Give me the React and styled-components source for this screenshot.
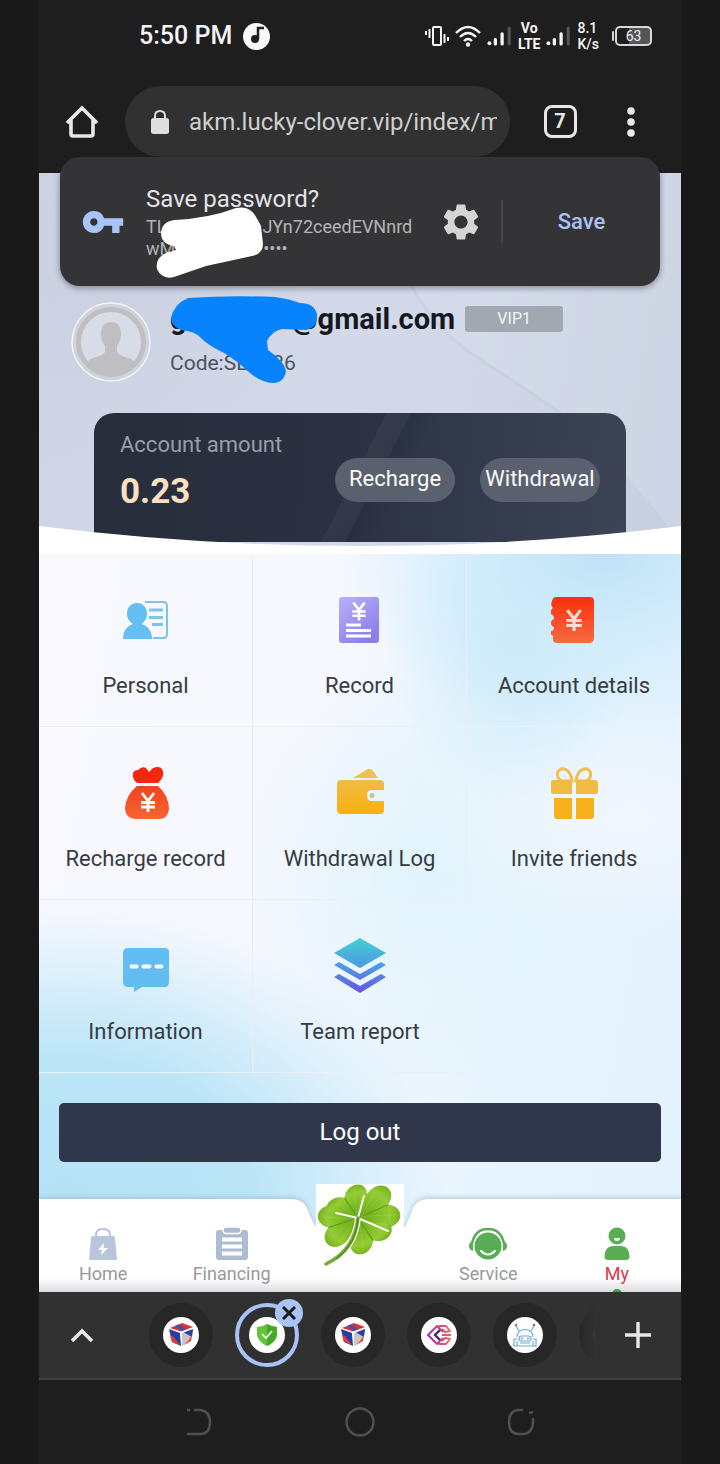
import { useState } from "react";
import styled, { createGlobalStyle, css } from "styled-components";
import { MdSettings, MdVpnKey } from "react-icons/md";

const GlobalStyle = createGlobalStyle`
    * {
        box-sizing: border-box;
    }
    body {
        margin: 0;
        background: #191919;
        font-family: Roboto, "Noto Sans", sans-serif;
    }
    button {
        border: none;
        padding: 0;
        background: none;
        font-family: inherit;
        cursor: pointer;
    }
    a {
        text-decoration: none;
        color: inherit;
    }
    svg {
        display: block;
        flex-shrink: 0;
    }
`

const Container = styled.div`
    position: relative;
    margin: 0 39px;
    background: #1e1e1e;
    overflow: hidden;
`

// ===== STATUS BAR =====
const StatusBar = styled.header`
    height: 72px;
    padding: 0 29px 0 100px;
    display: flex;
    align-items: center;
    justify-content: space-between;
    color: #f4f4f4;
`

const StatusGroup = styled.div`
    display: flex;
    align-items: center;
    gap: ${props => props.$gap};
`

const Clock = styled.span`
    font-size: 25px;
    font-weight: 500;
    line-height: 30px;
`

const Stacked = styled.span`
    font-size: 14px;
    line-height: 16px;
    font-weight: ${props => props.$bold ? 700 : 500};
    text-align: ${props => props.$bold ? "center" : "left"};
    display: flex;
    flex-direction: column;
`

const Battery = styled.span`
    position: relative;
    width: 37px;
    height: 20px;
    margin-left: 10px;
    border: 2px solid #d8d8d8;
    border-radius: 5px;
    background: linear-gradient(90deg, #1e1e1e 35%, #555 35%);
    font-size: 14px;
    line-height: 16px;
    text-align: center;
    &::before {
        content: "";
        position: absolute;
        left: -5px;
        top: 3px;
        width: 2px;
        height: 10px;
        border-radius: 2px;
        background: #d8d8d8;
    }
`

// ===== BROWSER BAR =====
const BrowserBar = styled.nav`
    display: flex;
    align-items: center;
    padding: 14px 29px 16px 0;
    height: 101px;
`

const BarButton = styled.button`
    width: ${props => props.$width};
    flex-shrink: 0;
    display: flex;
    align-items: center;
    justify-content: center;
    color: #e8e8e8;
`

const Address = styled.label`
    flex: 1;
    min-width: 0;
    height: 71px;
    border-radius: 36px;
    background: #313131;
    display: flex;
    align-items: center;
    gap: 16px;
    padding: 0 13px 0 22px;
    color: #dedede;
`

const AddressInput = styled.input`
    flex: 1;
    min-width: 0;
    height: 36px;
    border: none;
    outline: none;
    padding: 0;
    background: none;
    color: #cfcfcf;
    font-family: inherit;
    font-size: 24px;
`

const TabCount = styled.span`
    width: 33px;
    height: 33px;
    border: 3px solid #e8e8e8;
    border-radius: 8px;
    font-size: 20px;
    font-weight: 700;
    line-height: 27px;
`

// ===== SAVE PASSWORD =====
const Prompt = styled.section`
    position: absolute;
    z-index: 2;
    top: 157px;
    left: 21px;
    right: 21px;
    height: 129px;
    padding-left: 21px;
    border-radius: 20px;
    background: #343437;
    box-shadow: 0 2px 6px rgba(30, 35, 50, 0.45);
    display: flex;
    align-items: center;
    color: #a9c5f8;
`

const PromptText = styled.div`
    flex: 1;
    min-width: 0;
    margin-left: 21px;
`

const PromptTitle = styled.h2`
    margin: 0 0 2px;
    font-size: 24px;
    font-weight: 400;
    line-height: 30px;
    color: #e3e3e5;
`

const PromptLine = styled.p`
    margin: 0;
    display: flex;
    gap: ${props => props.$gap};
    font-size: 18px;
    line-height: 22px;
    color: #b4b4b7;
`

const SettingsButton = styled.button`
    color: #d5d5d6;
    margin-right: 18px;
`

const SaveButton = styled.button`
    width: 159px;
    height: 43px;
    border-left: 2px solid #454548;
    color: #a9c1f6;
    font-size: 22px;
    font-weight: 500;
`

const Scribble = styled.svg`
    position: absolute;
    left: ${props => props.$left};
    top: ${props => props.$top};
`

// ===== HERO =====
const Hero = styled.section`
    position: relative;
    padding: 129px 55px 12px;
    background:
        radial-gradient(circle at 8% 20%, rgba(196, 203, 220, 0.5), transparent 34%),
        linear-gradient(100deg, #cfd5e4 0%, #d3d9e9 45%, #d2d8e8 65%, #c6cddd 100%);
`

const Swirl = styled.svg`
    position: absolute;
    right: 0;
    top: 0;
`

const Profile = styled.div`
    position: relative;
    display: flex;
    gap: 19px;
    margin: 0 -20px 31px -23px;
    height: 80px;
`

const Email = styled.h1`
    margin: 0 0 14px;
    display: flex;
    align-items: center;
    font-size: 29px;
    font-weight: 700;
    line-height: 34px;
    color: #16181f;
`

const Hidden = styled.span`
    width: ${props => props.$width};
`

const Code = styled.p`
    margin: 0;
    display: flex;
    font-size: 21px;
    line-height: 26px;
    color: #4d525e;
`

const Vip = styled.span`
    width: 98px;
    height: 26px;
    margin-left: 10px;
    border-radius: 3px;
    background: #a1a8b2;
    color: #f5f6f8;
    font-size: 16px;
    font-weight: 400;
    line-height: 26px;
    text-align: center;
`

const Card = styled.div`
    position: relative;
    height: 129px;
    padding: 17px 26px;
    border-radius: 20px 20px 0 0;
    background:
        linear-gradient(117deg, transparent 49%, rgba(255, 255, 255, 0.04) 49%, rgba(255, 255, 255, 0.02) 53%, rgba(10, 20, 40, 0.1) 53%, transparent 58%),
        linear-gradient(95deg, #282d3a 0%, #2b3142 45%, #3c4455 100%);
    display: flex;
    justify-content: space-between;
`

const CardLabel = styled.p`
    margin: 0 0 12px;
    font-size: 22px;
    line-height: 30px;
    color: #9a9ea8;
`

const Amount = styled.strong`
    display: block;
    font-size: 35px;
    line-height: 40px;
    color: #fbdfc3;
`

const CardActions = styled.div`
    display: flex;
    gap: 25px;
    margin-top: 28px;
`

const PillButton = styled.button`
    width: 120px;
    height: 44px;
    border-radius: 22px;
    background: #5a606e;
    color: #fafafa;
    font-size: 22px;
    line-height: 40px;
    padding-bottom: 2px;
    white-space: nowrap;
`

const Curve = styled.svg`
    position: absolute;
    left: 0;
    bottom: 0;
    width: 100%;
    height: 28px;
`

// ===== MENU =====
const Main = styled.main`
    background:
        radial-gradient(ellipse 42% 24% at 88% 0%, #bfe2f6 0%, rgba(207, 235, 251, 0.8) 45%, transparent 100%),
        radial-gradient(ellipse 20% 22% at 74% 12%, rgba(196, 232, 248, 0.8), transparent 100%),
        radial-gradient(ellipse 30% 16% at 92% 36%, rgba(244, 247, 255, 0.9), transparent 100%),
        radial-gradient(ellipse 60% 40% at 4% 88%, #b6e2f6 0%, #bbe5f7 50%, transparent 100%),
        radial-gradient(ellipse 30% 30% at 60% 44%, rgba(224, 243, 251, 0.9), transparent 100%),
        radial-gradient(ellipse 24% 10% at 50% 80%, rgba(240, 246, 255, 0.7), transparent 100%),
        linear-gradient(100deg, #f8f8fe 0%, #f6f8fe 42%, #e6f4fd 72%, #e2f1fd 100%);
`

const MenuGrid = styled.div`
    display: grid;
    grid-template-columns: repeat(3, 1fr);
`

const MenuItem = styled.a`
    height: 173px;
    padding-top: 38px;
    display: flex;
    flex-direction: column;
    align-items: center;
    gap: 23px;
    border-bottom: 1px solid #ebeff6;
    border-right: 1px solid #e9eef6;
    font-size: 22px;
    line-height: 30px;
    color: #363b43;
    &:nth-child(3n), &:last-child {
        border-right: none;
    }
`

const MenuIcon = styled.svg`
    width: 56px;
    height: 56px;
`

const LogOut = styled.button`
    display: block;
    width: calc(100% - 40px);
    height: 59px;
    margin: 30px 20px 37px;
    padding-bottom: 2px;
    border-radius: 5px;
    background: #31374a;
    color: #fcfcfc;
    font-size: 24px;
`

// ===== APP TABS =====
const AppTabs = styled.nav`
    position: relative;
    height: 93px;
    display: grid;
    grid-template-columns: repeat(5, 1fr);
    overflow: visible;
`

const AppTabsShape = styled.svg`
    position: absolute;
    inset: 0;
    width: 100%;
    height: 100%;
    overflow: visible;
    filter: drop-shadow(0 -2px 2px rgba(120, 150, 180, 0.35));
`

const AppTabsShade = styled.div`
    position: absolute;
    left: 0;
    right: 0;
    bottom: 0;
    height: 14px;
    background: linear-gradient(180deg, transparent, #dcdcdf);
`

const AppTab = styled.a`
    position: relative;
    padding-top: 28px;
    display: flex;
    flex-direction: column;
    align-items: center;
    gap: 2px;
    font-size: 18px;
    line-height: 22px;
    color: ${props => props.$active ? "#dc3848" : "#96989c"};
    ${props => props.$active && css`
        &::after {
            content: "";
            position: absolute;
            bottom: -7px;
            width: 10px;
            height: 10px;
            border-radius: 50%;
            background: #449b45;
        }
    `}
`

const CloverTab = styled.a`
    position: relative;
    justify-self: center;
    margin-top: -15px;
    width: 88px;
    height: 86px;
    background: #fdfefd;
`

// ===== BROWSER TAB STRIP =====
const TabStrip = styled.nav`
    position: relative;
    height: 88px;
    display: flex;
    background: #313132;
    border-bottom: 2px solid #404041;
`

const StripList = styled.div`
    flex: 1;
    min-width: 0;
    margin-left: 13px;
    display: flex;
    overflow: hidden;
    mask-image: linear-gradient(90deg, #000 96%, transparent 100%);
`

const StripTab = styled.button`
    position: relative;
    width: 86px;
    flex-shrink: 0;
    display: flex;
    align-items: center;
    justify-content: center;
`

const StripCircle = styled.span`
    width: 64px;
    height: 64px;
    border-radius: 50%;
    display: flex;
    align-items: center;
    justify-content: center;
    background: ${props => props.$active ? "#303031" : "#272728"};
    border: ${props => props.$active ? "4px solid #a9c3f5" : "none"};
`

const CloseBadge = styled.span`
    position: absolute;
    top: 7px;
    right: 7px;
    width: 28px;
    height: 28px;
    border-radius: 50%;
    background: #a9c3f5;
    display: flex;
    align-items: center;
    justify-content: center;
`

// ===== SYSTEM KEYS =====
const SystemKeys = styled.footer`
    height: 84px;
    padding: 0 80px;
    display: grid;
    grid-template-columns: repeat(3, 1fr);
`

const SystemKey = styled.button`
    display: flex;
    align-items: center;
    justify-content: center;
`

const Signal = () => (
  <svg width="25" height="20" viewBox="0 0 26 20">
    <circle cx="2.5" cy="17.5" r="2" fill="#f4f4f4" />
    <rect x="7" y="12" width="3.4" height="8" rx="1.6" fill="#f4f4f4" />
    <rect x="14" y="6" width="3.4" height="14" rx="1.6" fill="#f4f4f4" />
    <rect x="21.5" y="0" width="3.2" height="20" rx="1.6" fill="#555" />
  </svg>
)

const Yen = ({ x, y, size = 1, color = "#fff" }) => (
  <g transform={`translate(${x} ${y}) scale(${size})`} fill="none" stroke={color} strokeWidth="2.8">
    <path d="M-6 -9 L0 -1 L6 -9 M0 -2 V10 M-7 0.5 H7 M-7 5 H7" />
  </g>
)

const PersonalIcon = () => (
  <MenuIcon viewBox="0 0 56 56">
    <path d="M27 10 H45 Q49 10 49 14 V42 Q49 46 45 46 H35" fill="none" stroke="#7cc4ea" strokeWidth="2" />
    <path d="M31 18 H45 M31 25.5 H45 M34 32.5 H45" stroke="#7cc4ea" strokeWidth="3" />
    <path d="M19 11 C25 11 29 15.500 29 21.500 C29 26.500 26.500 30 23.500 32 C30 34 34 39 34 47 H5 C5 39 9 34 15 32 C11.500 30 9 26.500 9 21.500 C9 15.500 13 11 19 11Z" fill="#66bff2" />
  </MenuIcon>
)

const RecordIcon = () => (
  <MenuIcon viewBox="0 0 56 56">
    <defs>
      <linearGradient id="rec" x1="0" y1="0" x2="0.6" y2="1">
        <stop offset="0" stopColor="#b9b0fa" />
        <stop offset="1" stopColor="#8a7fe9" />
      </linearGradient>
    </defs>
    <rect x="7" y="5" width="40" height="46" rx="3" fill="url(#rec)" />
    <Yen x={27} y={19} size={0.95} />
    <path d="M14 33 H29 M14 38.500 H39 M14 44 H39" stroke="#fff" strokeWidth="3" />
  </MenuIcon>
)

const DetailsIcon = () => (
  <MenuIcon viewBox="0 0 56 56">
    <defs>
      <linearGradient id="det" x1="0" y1="0" x2="0" y2="1">
        <stop offset="0" stopColor="#fb2f0c" />
        <stop offset="1" stopColor="#f56c42" />
      </linearGradient>
    </defs>
    <path d="M10 5 H44 Q48 5 48 9 V46 Q48 51 43 51 H11 Q7 51 7 47 V44 Q4 43 5 39 Q8 39 8 35 Q5 34 5 31 Q5 28 8 27 Q8 23 5 22 Q4 18 7 16 Q4 13 6 9 Q7 5 10 5Z" fill="url(#det)" />
    <Yen x={28} y={28} size={1.1} color="#fbe1d5" />
  </MenuIcon>
)

const MoneyBagIcon = () => (
  <MenuIcon viewBox="0 0 56 56">
    <defs>
      <linearGradient id="bag" x1="0" y1="0" x2="0" y2="1">
        <stop offset="0" stopColor="#f0431c" />
        <stop offset="1" stopColor="#f76533" />
      </linearGradient>
    </defs>
    <path d="M19 18 Q14 14 15 8 Q16 5 20 5 Q24 1 28 3 L31 7 L35 3 Q40 1 43 3 Q46 6 45 11 Q43 16 40 18Z" fill="#f3260e" />
    <path d="M19 21 H40 Q51 31 51 44 Q50 54 41 54 H17 Q7 53 7 43 Q8 30 19 21Z" fill="url(#bag)" />
    <Yen x={30} y={37} />
  </MenuIcon>
)

const WalletIcon = () => (
  <MenuIcon viewBox="0 0 56 56">
    <defs>
      <linearGradient id="wal" x1="0" y1="0" x2="0" y2="1">
        <stop offset="0" stopColor="#f0bd45" />
        <stop offset="1" stopColor="#f8b00f" />
      </linearGradient>
    </defs>
    <path d="M21 13 L34 5 Q38 2 41 6 L46 13Z" fill="#f1bf4c" />
    <path d="M9 15 H48 Q52 15 52 19 V25 H40 Q35 25 35 30 Q35 36 40 36 H52 V45 Q52 49 48 49 H9 Q5 49 5 45 V19 Q5 15 9 15Z" fill="url(#wal)" />
    <circle cx="40" cy="30.500" r="2.500" fill="#b9c98a" />
  </MenuIcon>
)

const GiftIcon = () => (
  <MenuIcon viewBox="0 0 56 56">
    <g fill="none" stroke="#f0be4d" strokeWidth="3">
      <path d="M26 16 C25 7 20 3 15 4 C9 7 11 15 17 16 Z" />
      <path d="M30 16 C31 7 36 3 41 4 C47 7 45 15 39 16 Z" />
    </g>
    <path d="M7 15 H26 V29 H7 Q5 29 5 27 V17 Q5 15 7 15Z M30 15 H49 Q52 15 52 18 V27 Q52 29 49 29 H30Z" fill="#f1bb42" />
    <path d="M8 33 H26 V54 H11 Q8 54 8 51Z M30 33 H48 V51 Q48 54 45 54 H30Z" fill="#f8b11c" />
  </MenuIcon>
)

const MessageIcon = () => (
  <MenuIcon viewBox="0 0 56 56">
    <path d="M10 10 H47 Q51 10 51 14 V44 Q51 49 47 49 H24 L16 54 L16 49 H10 Q5 49 5 44 V15 Q5 10 10 10Z" fill="#62bdf1" />
    <path d="M13.500 28.500 H18.500 M25.500 28.500 H31.500 M38.500 28.500 H43.500" stroke="#fff" strokeWidth="4" strokeLinecap="round" />
  </MenuIcon>
)

const TeamIcon = () => (
  <MenuIcon viewBox="0 0 56 56">
    <defs>
      <linearGradient id="team" gradientUnits="userSpaceOnUse" x1="0" y1="0" x2="0" y2="56">
        <stop offset="0" stopColor="#46cfd2" />
        <stop offset="0.5" stopColor="#4b9ce3" />
        <stop offset="1" stopColor="#6d51e2" />
      </linearGradient>
    </defs>
    <path d="M28 0 L54 15 L28 30 L2 15Z M2 27 L7 24 L28 36 L49 24 L54 27 L28 42Z M2 39 L7 36 L28 48 L49 36 L54 39 L28 55Z" fill="url(#team)" />
  </MenuIcon>
)

const HomeIcon = () => (
  <svg width="34" height="34" viewBox="0 0 34 34">
    <path d="M10 10 V8 Q10 2 17 2 Q24 2 24 8 V10" fill="none" stroke="#b6c3da" strokeWidth="2" />
    <path d="M7 9 H27 Q29 9 29 11 L31 33 H3 L5 11 Q5 9 7 9Z" fill="#b9c5da" />
    <path d="M18 16 L12 23 H16 L15 28 L22 21 H17.500Z" fill="#fff" />
  </svg>
)

const FinancingIcon = () => (
  <svg width="34" height="34" viewBox="0 0 34 34">
    <rect x="1" y="3" width="32" height="30" rx="3" fill="#aebcd3" />
    <rect x="8" y="0" width="18" height="6.500" rx="3" fill="#aebcd3" stroke="#fff" strokeWidth="1.500" />
    <path d="M7 12.500 H27 M7 19.500 H27 M7 26.500 H27" stroke="#fff" strokeWidth="4" />
  </svg>
)

const ServiceIcon = () => (
  <svg width="40" height="34" viewBox="0 0 40 34">
    <circle cx="20" cy="19" r="13.500" fill="#58ad55" />
    <path d="M4 17 C6 6 12 2 20 2 C28 2 34 6 36 17" fill="none" stroke="#58ad55" strokeWidth="2.500" />
    <path d="M5 14 V24 Q1 23 1 19 Q1 15 5 14Z M35 14 V24 Q39 23 39 19 Q39 15 35 14Z" fill="#58ad55" />
    <path d="M13 24 Q20 31 27 24" fill="none" stroke="#fff" strokeWidth="2" strokeLinecap="round" />
  </svg>
)

const MyIcon = () => (
  <svg width="26" height="34" viewBox="0 0 26 34">
    <circle cx="13" cy="9" r="8.500" fill="#58ad55" />
    <path d="M10 11 H16 Q16 14 13 14 Q10 14 10 11Z" fill="#fff" />
    <path d="M8 19 H18 Q25 20 25.500 29 Q25.500 33 22 33 H4 Q0.500 33 0.500 29 Q1 20 8 19Z" fill="#58ad55" />
  </svg>
)

const leaf = "M0 0 C-7 -5 -20 -12 -21 -22 C-22 -33 -8 -38 0 -27 C8 -38 22 -33 21 -22 C20 -12 7 -5 0 0Z"

const leaves = [
  { angle: -34, scale: "1.08 0.9" },
  { angle: 66, scale: "1.02 1.22" },
  { angle: -108, scale: "1 1.15" },
  { angle: 146, scale: "1.1 1" },
]

const Clover = () => (
  <svg width="88" height="86" viewBox="0 0 88 86">
    <defs>
      <radialGradient id="leaf" gradientUnits="userSpaceOnUse" cx="0" cy="0" r="36">
        <stop offset="0" stopColor="#5c9f18" />
        <stop offset="0.4" stopColor="#7dba22" />
        <stop offset="0.75" stopColor="#94cb36" />
        <stop offset="1" stopColor="#74b31d" />
      </radialGradient>
    </defs>
    {leaves.map(({ angle, scale }) => (
      <g key={angle} transform={`translate(42 34) rotate(${angle}) scale(${scale})`}>
        <path d={leaf} fill="url(#leaf)" />
        <path d="M0 0 V-27" fill="none" stroke="#5f9d1a" strokeWidth="1" />
        <path d="M0 -3 L-12 -29 M0 -3 L12 -29 M0 -3 L-18 -22 M0 -3 L18 -22" fill="none" stroke="#c0e05e" strokeWidth="0.600" opacity="0.35" />
      </g>
    ))}
    <path d="M42 34 L20 29 M42 34 L48 12 M42 34 L72 47" fill="none" stroke="#fafdf5" strokeWidth="2" strokeLinecap="round" />
    <path d="M42 34 C40 53 31 70 10 80" fill="none" stroke="#fafdf5" strokeWidth="6" />
    <path d="M42 34 C40 53 31 70 10 80" fill="none" stroke="#78a93a" strokeWidth="3.500" strokeLinecap="round" />
    <path d="M42 34 C41 52 33 66 20 75" fill="none" stroke="#4f8420" strokeWidth="1.300" />
  </svg>
)

const CubeFavicon = () => (
  <svg width="36" height="36" viewBox="0 0 36 36">
    <circle cx="18" cy="18" r="18" fill="#fff" />
    <path d="M7 11 L19 6 L30 10 L18 14.500Z" fill="#d9303a" />
    <path d="M12 9 L16 7.500 L23 12 L19 14Z" fill="#4051ad" />
    <path d="M6 12 L17 16 L18 29 L9 25Z" fill="#2440a0" />
    <path d="M7 18 L10 19 L17 28 L9 25Z" fill="#dc3c40" />
    <path d="M19 16 L30 12 L28 24 L19 29Z" fill="#c9c4c7" />
    <path d="M21 15.500 L30 12 L29 20Z" fill="#2b3f9c" />
    <path d="M25 24 L29 18 L28 24 L21 28Z" fill="#df4d40" />
  </svg>
)

const ShieldFavicon = () => (
  <svg width="36" height="36" viewBox="0 0 36 36">
    <circle cx="18" cy="18" r="18" fill="#fff" />
    <path d="M18 7 Q23 10 28 10 V18 Q27 25 18 29 Q9 25 8 18 V10 Q13 10 18 7Z" fill="#62c735" />
    <path d="M18 7 Q23 10 28 10 V18 Q27 25 18 29Z" fill="#46a927" />
    <path d="M13 17 L17 21 L23 14" fill="none" stroke="#fff" strokeWidth="1.600" />
  </svg>
)

const LinkFavicon = () => (
  <svg width="36" height="36" viewBox="0 0 36 36">
    <defs>
      <linearGradient id="pink" gradientUnits="userSpaceOnUse" x1="6" y1="0" x2="30" y2="0">
        <stop offset="0" stopColor="#a02bb0" />
        <stop offset="1" stopColor="#f2655f" />
      </linearGradient>
    </defs>
    <circle cx="18" cy="18" r="18" fill="#fff" />
    <g fill="none" stroke="url(#pink)" strokeWidth="2" strokeLinejoin="round">
      <path d="M19 12 L16 9 L7 18 L16 27 L19 24" />
      <path d="M22 15 L17 10 L19 9 H25 L29 14 L24 15 L21 12" />
      <path d="M22 21 L17 26 L19 27 H25 L29 22 L24 21 L21 24" />
      <path d="M21 18 L30 18.010" />
    </g>
    <path d="M19 13 L14 18 L19 23" fill="none" stroke="#43217c" strokeWidth="2.400" />
  </svg>
)

const RobotFavicon = () => (
  <svg width="36" height="36" viewBox="0 0 36 36">
    <circle cx="18" cy="18" r="18" fill="#fff" />
    <g fill="none" stroke="#6da9d3" strokeWidth="1.200">
      <path d="M10 20 C10 10 26 10 26 20 M12 14 L9 9 M24 14 L27 9 M10 24 V29 H26 V24 M10 22 H7 V29 H10 M26 22 H29 V29 H26 M13 26 H23" />
      <rect x="12" y="19" width="12" height="5" rx="2.500" />
    </g>
    <circle cx="15" cy="21.500" r="0.900" fill="#4d89b4" />
    <circle cx="21" cy="21.500" r="0.900" fill="#4d89b4" />
    <circle cx="9" cy="8" r="1.300" fill="#4d89b4" />
    <circle cx="27" cy="8" r="1.300" fill="#4d89b4" />
  </svg>
)

const DimFavicon = () => (
  <svg width="40" height="36" viewBox="0 0 40 36">
    <circle cx="20" cy="18" r="17" fill="none" stroke="#aaa" strokeWidth="2" />
  </svg>
)

const menuItems = [
  { label: "Personal", Icon: PersonalIcon },
  { label: "Record", Icon: RecordIcon },
  { label: "Account details", Icon: DetailsIcon },
  { label: "Recharge record", Icon: MoneyBagIcon },
  { label: "Withdrawal Log", Icon: WalletIcon },
  { label: "Invite friends", Icon: GiftIcon },
  { label: "Information", Icon: MessageIcon },
  { label: "Team report", Icon: TeamIcon },
];

const favicons = [CubeFavicon, ShieldFavicon, CubeFavicon, LinkFavicon, RobotFavicon, DimFavicon];

const App = () => {
  const [url, setUrl] = useState("akm.lucky-clover.vip/index/m");
  const [activeTab, setActiveTab] = useState(1);

  return (
    <Container>
      <GlobalStyle />
      <StatusBar>
        <StatusGroup $gap="11px">
          <Clock>5:50 PM</Clock>
          <svg width="27" height="27" viewBox="0 0 27 27">
            <circle cx="13.500" cy="13.500" r="13.500" fill="#f8f8f8" />
            <circle cx="12" cy="16" r="4" fill="#1e1e1e" />
            <path d="M15 16 V5 H21" fill="none" stroke="#1e1e1e" strokeWidth="2.500" />
          </svg>
        </StatusGroup>
        <StatusGroup $gap="6px">
          <svg width="24" height="22" viewBox="0 0 24 22" fill="none" stroke="#f4f4f4">
            <rect x="8" y="2" width="8" height="18" rx="1" strokeWidth="2" />
            <path d="M1 6 V10 M4.500 4 V13 M19.500 9 V18 M23 12 V16" strokeWidth="2" />
          </svg>
          <svg width="26" height="22" viewBox="0 0 26 22" fill="none" stroke="#f4f4f4" strokeWidth="2.400">
            <path d="M1 8 Q13 -4 25 8 M5 12 Q13 4 21 12 M9 16 Q13 12 17 16" />
            <circle cx="13" cy="19.500" r="1" />
          </svg>
          <Signal />
          <Stacked $bold>
            <span>Vo</span>
            <span>LTE</span>
          </Stacked>
          <Signal />
          <Stacked>
            <span>8.1</span>
            <span>K/s</span>
          </Stacked>
          <Battery>63</Battery>
        </StatusGroup>
      </StatusBar>

      <BrowserBar>
        <BarButton $width="86px" aria-label="Home">
          <svg width="34" height="34" viewBox="0 0 34 34" fill="none" stroke="#e8e8e8" strokeWidth="3.600">
            <path d="M2 18 L17 3 L32 18 M6 15 V29 Q6 31 8 31 H26 Q28 31 28 29 V15" />
          </svg>
        </BarButton>
        <Address>
          <svg width="26" height="26" viewBox="0 0 26 26">
            <path d="M8 10 V7 Q8 2 13 2 Q18 2 18 7 V10" fill="none" stroke="#dedede" strokeWidth="2" />
            <rect x="4" y="9" width="18" height="16" rx="2.500" fill="#dedede" />
          </svg>
          <AddressInput aria-label="Address" value={url} onChange={e => setUrl(e.target.value)} />
        </Address>
        <BarButton $width="100px" aria-label="Tabs">
          <TabCount>7</TabCount>
        </BarButton>
        <BarButton $width="42px" aria-label="Menu">
          <svg width="8" height="30" viewBox="0 0 8 30" fill="#e8e8e8">
            <circle cx="4" cy="4" r="3.800" />
            <circle cx="4" cy="15" r="3.800" />
            <circle cx="4" cy="26" r="3.800" />
          </svg>
        </BarButton>
      </BrowserBar>

      <Prompt>
        <MdVpnKey size={44} />
        <PromptText>
          <PromptTitle>Save password?</PromptTitle>
          <PromptLine $gap="96px"><span>TL</span><span>JYn72ceedEVNnrd</span></PromptLine>
          <PromptLine $gap="88px"><span>wM</span><span>••••</span></PromptLine>
        </PromptText>
        <SettingsButton aria-label="Settings">
          <MdSettings size={44} />
        </SettingsButton>
        <SaveButton>Save</SaveButton>
        <Scribble $left="95px" $top="48px" width="110" height="75" viewBox="155 205 110 75">
          <path d="M161 233 Q162 221 175 220 Q210 218 236 208 Q250 205 256 217 Q258 220 261 226 L263 244 Q263 254 252 256 L206 266 L174 277 Q162 280 157 269 Q155 258 166 253 L176 250 L174 246 Q161 244 161 233Z" fill="#fff" />
        </Scribble>
      </Prompt>

      <Hero>
        <Swirl width="300" height="381" viewBox="0 0 300 381">
          <path d="M24 100 Q50 155 100 187 Q140 212 180 240 Q240 290 300 370 V0 H24Z" fill="#d8deeb" opacity="0.4" />
          <path d="M24 100 Q50 155 100 187 Q140 212 180 240" fill="none" stroke="#bcc3d4" strokeWidth="3" opacity="0.3" />
        </Swirl>
        <Profile>
          <svg width="80" height="80" viewBox="0 0 80 80">
            <circle cx="40" cy="40" r="39" fill="#cfd3dc" stroke="#f2f4fa" strokeWidth="1.500" />
            <circle cx="40" cy="40" r="32.500" fill="#d8dce6" stroke="#bfbfc1" strokeWidth="5" />
            <path d="M40 20 C47 20 50 25 50 32 C50 38 48 41 46 44 V50 C49 55 59 55 63 59 C58 68 50 72 40 72 C30 72 22 68 17 59 C21 55 31 55 34 50 V44 C32 41 30 38 30 32 C30 25 33 20 40 20Z" fill="#bfbfc1" />
          </svg>
          <div>
            <Email>
              <span>g</span>
              <Hidden $width="105px" />
              <span>@gmail.com</span>
              <Vip>VIP1</Vip>
            </Email>
            <Code>
              <span>Code:SE</span>
              <Hidden $width="24px" />
              <span>36</span>
            </Code>
          </div>
          <Scribble $left="99px" $top="-6px" width="148" height="88" viewBox="170 296 148 88">
            <path d="M171 318 Q174 304 188 298 Q230 295 275 297 Q290 299 300 303 Q314 303 317 314 Q318 328 306 330 L282 329 Q272 331 267 341 L268 350 Q284 361 286 371 Q284 383 273 383 Q262 383 250 373 Q236 360 224 353 Q206 344 201 338 Q195 331 181 330 Q171 326 171 318Z" fill="#0783fd" />
          </Scribble>
        </Profile>
        <Card>
          <div>
            <CardLabel>Account amount</CardLabel>
            <Amount>0.23</Amount>
          </div>
          <CardActions>
            <PillButton>Recharge</PillButton>
            <PillButton>Withdrawal</PillButton>
          </CardActions>
        </Card>
        <Curve viewBox="0 0 642 28" preserveAspectRatio="none">
          <path d="M0 0 Q321 40 642 0 V28 H0Z" fill="#fff" />
        </Curve>
      </Hero>

      <Main>
        <MenuGrid>
          {menuItems.map(({ label, Icon }) => (
            <MenuItem href="#" key={label}>
              <Icon />
              {label}
            </MenuItem>
          ))}
        </MenuGrid>
        <LogOut>Log out</LogOut>

        <AppTabs>
          <AppTabsShape viewBox="0 0 642 93" preserveAspectRatio="none">
            <path d="M0 0 H252 C272 1 266 14 278 29 H365 C376 14 370 1 390 0 H642 V93 H0Z" fill="#fff" />
          </AppTabsShape>
          <AppTabsShade />
          <AppTab href="#"><HomeIcon />Home</AppTab>
          <AppTab href="#"><FinancingIcon />Financing</AppTab>
          <CloverTab href="#" aria-label="Lucky clover"><Clover /></CloverTab>
          <AppTab href="#"><ServiceIcon />Service</AppTab>
          <AppTab href="#" $active><MyIcon />My</AppTab>
        </AppTabs>
      </Main>

      <TabStrip>
        <BarButton $width="86px" aria-label="Expand">
          <svg width="22" height="14" viewBox="0 0 22 14" fill="none" stroke="#e8e8e8" strokeWidth="3.600">
            <path d="M1 13 L11 3 L21 13" />
          </svg>
        </BarButton>
        <StripList>
          {favicons.map((Favicon, index) => (
            <StripTab key={index} aria-label={`Tab ${index + 1}`} onClick={() => setActiveTab(index)}>
              <StripCircle $active={index === activeTab}>
                <Favicon />
              </StripCircle>
              {index === activeTab && (
                <CloseBadge>
                  <svg width="14" height="14" viewBox="0 0 14 14" stroke="#18191b" strokeWidth="3">
                    <path d="M1 1 L13 13 M13 1 L1 13" />
                  </svg>
                </CloseBadge>
              )}
            </StripTab>
          ))}
        </StripList>
        <BarButton $width="86px" aria-label="New tab">
          <svg width="26" height="26" viewBox="0 0 26 26" stroke="#e8e8e8" strokeWidth="3.400">
            <path d="M13 0 V26 M0 13 H26" />
          </svg>
        </BarButton>
      </TabStrip>

      <SystemKeys>
        <SystemKey aria-label="Back">
          <svg width="26" height="28" viewBox="0 0 26 28" fill="none" stroke="#505050" strokeWidth="2.500">
            <path d="M1 2 H4 M8 2 H14 Q24 3 24 14 Q24 26 14 26 H1" />
          </svg>
        </SystemKey>
        <SystemKey aria-label="Home screen">
          <svg width="30" height="30" viewBox="0 0 30 30" fill="none" stroke="#505050" strokeWidth="2.500">
            <circle cx="15" cy="15" r="13.500" />
          </svg>
        </SystemKey>
        <SystemKey aria-label="Recent apps">
          <svg width="28" height="28" viewBox="0 0 28 28" fill="none" stroke="#505050" strokeWidth="2.500">
            <path d="M16 2 H11 Q2 3 2 14 Q2 26 12 26 H17 Q26 25 26 13 V10 M22 5 L26 4" />
          </svg>
        </SystemKey>
      </SystemKeys>
    </Container>
  );
};

export default App
